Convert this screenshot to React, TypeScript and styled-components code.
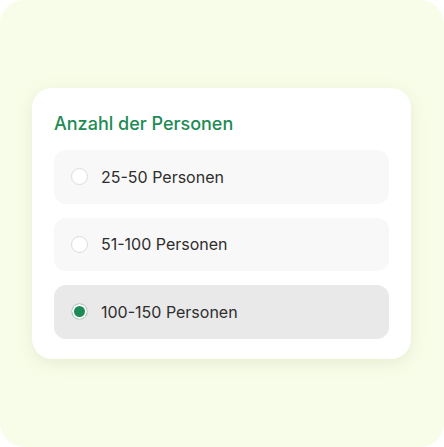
import { useState } from "react"
import styled, { createGlobalStyle } from "styled-components"

const GlobalStyle = createGlobalStyle`
  html, body {
    margin: 0;
    padding: 0;
    background: #ffffff;
  }
  body {
    font-family: Inter, "Noto Sans", sans-serif;
    -webkit-font-smoothing: antialiased;
  }
`

const options = ["25-50 Personen", "51-100 Personen", "100-150 Personen"]

export default function App() {
  const [selected, setSelected] = useState(2)

  return (
    <>
      <GlobalStyle />
      <Page>
        <Card>
          <Title>Anzahl der Personen</Title>
          <OptionList>
            {options.map((label, index) => (
              <Option key={label} $active={index === selected} onClick={() => setSelected(index)}>
                <Radio $checked={index === selected} />
                <Label>{label}</Label>
              </Option>
            ))}
          </OptionList>
        </Card>
      </Page>
    </>
  )
}

const Page = styled.div`
  width: 444px;
  height: 447px;
  box-sizing: border-box;
  background: #f8fde9;
  border-radius: 24px;
  display: flex;
  align-items: flex-start;
  padding: 88px 0 0 32px;
`

const Card = styled.div`
  width: 379px;
  box-sizing: border-box;
  background: #ffffff;
  border-radius: 20px;
  padding: 22px 22px 20px;
  box-shadow: 0 4px 16px rgba(180, 190, 140, 0.25);
`

const Title = styled.h2`
  margin: 0 0 13px;
  font-size: 18px;
  line-height: 27px;
  font-weight: 500;
  color: #1e8a55;
`

const OptionList = styled.div`
  display: flex;
  flex-direction: column;
  gap: 14px;
`

const Option = styled.div<{ $active: boolean }>`
  display: flex;
  align-items: center;
  gap: 13px;
  height: 53.5px;
  padding: 0 17px;
  border-radius: 12px;
  background: ${(props) => (props.$active ? "#e9e9e9" : "#f8f8f8")};
  cursor: pointer;
`

const Radio = styled.span<{ $checked: boolean }>`
  width: 17px;
  height: 17px;
  box-sizing: border-box;
  border-radius: 50%;
  border: 1.5px solid #dcdcdc;
  background: ${(props) => (props.$checked ? "#1e8a55" : "#ffffff")};
  box-shadow: ${(props) => (props.$checked ? "inset 0 0 0 2px #ffffff" : "none")};
  flex-shrink: 0;
`

const Label = styled.span`
  font-size: 16px;
  color: #2e2e2e;
`
